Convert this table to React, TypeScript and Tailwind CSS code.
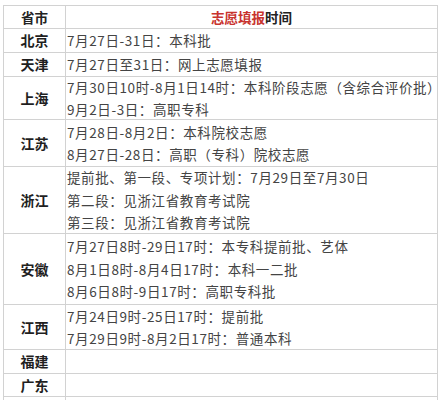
import React from "react";

type Row = { province: string; lines: string[]; h: string };

const rows: Row[] = [
  { province: "北京", lines: ["7月27日-31日：本科批"], h: "h-[23px]" },
  { province: "天津", lines: ["7月27日至31日：网上志愿填报"], h: "h-[23px]" },
  {
    province: "上海",
    lines: ["7月30日10时-8月1日14时：本科阶段志愿（含综合评价批）", "9月2日-3日：高职专科"],
    h: "h-[42px]",
  },
  {
    province: "江苏",
    lines: ["7月28日-8月2日：本科院校志愿", "8月27日-28日：高职（专科）院校志愿"],
    h: "h-[46px]",
  },
  {
    province: "浙江",
    lines: ["提前批、第一段、专项计划：7月29日至7月30日", "第二段：见浙江省教育考试院", "第三段：见浙江省教育考试院"],
    h: "h-[66px]",
  },
  {
    province: "安徽",
    lines: ["7月27日8时-29日17时：本专科提前批、艺体", "8月1日8时-8月4日17时：本科一二批", "8月6日8时-9日17时：高职专科批"],
    h: "h-[70px]",
  },
  {
    province: "江西",
    lines: ["7月24日9时-25日17时：提前批", "7月29日9时-8月2日17时：普通本科"],
    h: "h-[44px]",
  },
  { province: "福建", lines: [], h: "h-[23px]" },
  { province: "广东", lines: [], h: "h-[22px]" },
  { province: "", lines: [], h: "h-[22px]" },
];

export default function App() {
  return (
    <div
      className="w-[443px] h-[400px] overflow-hidden bg-white pt-[5px] pl-[3px]"
      style={{ fontFamily: '"Noto Sans CJK SC", "Noto Sans", sans-serif' }}
    >
      <div className="w-[435px] border-t border-l border-r border-[#d2d2d2] text-[13.5px]">
        {/* header */}
        <div className="flex h-[23px] border-b border-[#d2d2d2]">
          <div className="w-[62px] shrink-0 border-r border-[#d2d2d2] flex items-center justify-center font-bold text-[#222]">
            省市
          </div>
          <div className="flex-1 flex items-center justify-center font-bold">
            <span className="text-[#c8332e]">志愿填报</span>
            <span className="text-[#222]">时间</span>
          </div>
        </div>

        {rows.map((row, i) => (
          <div key={i} className={`flex border-b border-[#d2d2d2] ${row.h} box-content`}>
            <div className="w-[62px] shrink-0 border-r border-[#d2d2d2] flex items-center justify-center font-bold text-[#1f1f1f] text-[14px]">
              {row.province}
            </div>
            <div className="flex-1 flex flex-col justify-center pl-[1px] text-[#444] leading-[22.5px] tracking-[0.6px] whitespace-nowrap">
              {row.lines.map((line, j) => (
                <div key={j}>{line}</div>
              ))}
            </div>
          </div>
        ))}
      </div>
    </div>
  );
}
